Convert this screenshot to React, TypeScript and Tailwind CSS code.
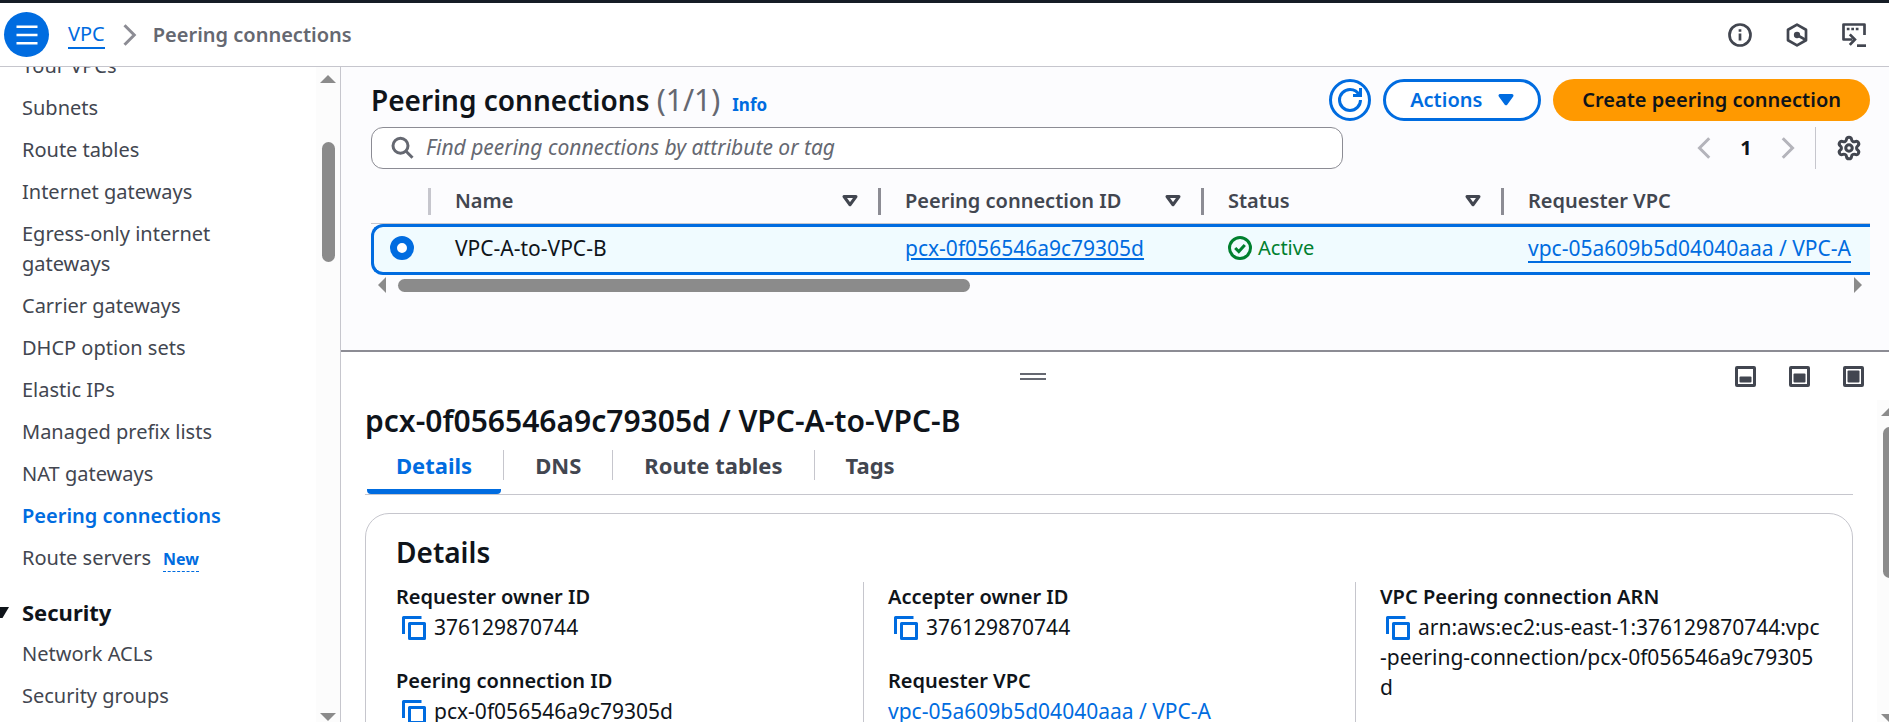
import type { ReactNode } from "react";
import { Settings } from "lucide-react";

type IconProps = { children: ReactNode; className?: string };

function Icon({ children, className = "size-6" }: IconProps) {
  return (
    <svg viewBox="0 0 16 16" className={`shrink-0 ${className}`} fill="none" stroke="currentColor" strokeWidth={2} aria-hidden="true">
      {children}
    </svg>
  );
}

const CopyIcon = () => (
  <Icon className="size-6 text-[#006ce0]">
    <path d="M1 12V1h12" strokeLinejoin="round" />
    <path d="M5 5h10v10H5z" strokeLinejoin="round" />
  </Icon>
);

const navItems = [
  "Your VPCs",
  "Subnets",
  "Route tables",
  "Internet gateways",
  "Egress-only internet gateways",
  "Carrier gateways",
  "DHCP option sets",
  "Elastic IPs",
  "Managed prefix lists",
  "NAT gateways",
  "Peering connections",
  "Route servers",
];

function Arrow({ dir }: { dir: "up" | "down" | "left" | "right" }) {
  const points = {
    up: "0,8 8,0 16,8",
    down: "0,0 16,0 8,8",
    left: "8,0 8,16 0,8",
    right: "0,0 8,8 0,16",
  }[dir];
  const vertical = dir === "up" || dir === "down";
  return (
    <svg
      viewBox={vertical ? "0 0 16 8" : "0 0 8 16"}
      className={vertical ? "h-2 w-4 shrink-0" : "h-4 w-2 shrink-0"}
      fill="#8b8b8b"
      aria-hidden="true"
    >
      <polygon points={points} />
    </svg>
  );
}

function Header() {
  return (
    <header className="flex h-[67px] shrink-0 items-center border-t-3 border-b border-t-[#161d26] border-b-[#c6c6cd] bg-white pr-[23px] pl-1 text-[20px] leading-[30px]">
      <button aria-label="Open navigation" className="flex size-[45px] items-center justify-center rounded-full bg-[#006ce0] text-white">
        <Icon>
          <path d="M1 2.500h14M1 8h14M1 13.500h14" strokeWidth="1.8" />
        </Icon>
      </button>
      <nav aria-label="Breadcrumbs" className="ml-[19px] flex items-center">
        <a href="#vpc" className="border-b-2 border-[#006ce0] leading-[26px] text-[#006ce0]">
          VPC
        </a>
        <Icon className="mx-3 size-6 text-[#8c8c94]">
          <path d="m5 1.500 6.500 6.500-6.500 6.500" />
        </Icon>
        <span className="font-semibold text-[#656871]">Peering connections</span>
      </nav>
      <div className="ml-auto flex gap-[33px] text-[#424650]">
        <button aria-label="Info">
          <Icon>
            <circle cx="8" cy="8" r="7" strokeWidth="1.8" />
            <path d="M8 7v4.600M8 4.100v1.800" strokeWidth="1.8" />
          </Icon>
        </button>
        <button aria-label="Amazon Q">
          <Icon>
            <path d="M8 1.100 14 4.500v7L8 14.900 2 11.500v-7z" strokeWidth="1.8" strokeLinejoin="round" />
            <circle cx="8" cy="8" r="2.100" fill="currentColor" stroke="none" />
            <path d="m8 8 5.500 3.100" strokeWidth="1.8" />
          </Icon>
        </button>
        <button aria-label="CloudShell">
          <Icon>
            <path d="M15 8V1H1v10h6" strokeWidth="1.8" strokeLinejoin="round" />
            <path d="m5.200 7.600 3.400 3.400-3.400 3.600" strokeWidth="1.8" />
            <path d="M10 15.100h6" strokeWidth="1.8" />
            <path d="M3.200 4h1.800M6.200 4h1.800M9.200 4h1.800" strokeWidth="1.8" />
          </Icon>
        </button>
      </div>
    </header>
  );
}

function Sidebar() {
  return (
    <aside className="flex w-[341px] shrink-0 overflow-hidden border-r border-[#c6c6cd] bg-white">
      <nav aria-label="VPC" className="min-w-0 flex-1 text-[20px] leading-[30px] text-[#424650]">
        <ul className="-mt-4 flex flex-col gap-3 pl-[22px]">
          {navItems.map((item) => (
            <li key={item} className="max-w-56">
              <a href="#nav" className={item === "Peering connections" ? "block whitespace-nowrap font-semibold text-[#006ce0]" : "inline-block"}>
                {item}
              </a>
              {item === "Route servers" && (
                <button className="ml-3 border-b border-dashed border-[#006ce0] text-[16px] leading-6 font-bold text-[#006ce0]">New</button>
              )}
            </li>
          ))}
          <li className="mt-3 -ml-[22px]">
            <button className="flex items-center text-[22px] leading-[30px] font-bold text-[#0f141a]">
              <svg viewBox="0 0 9 11" className="mr-[13px] h-[11px] w-[9px]" fill="currentColor" aria-hidden="true">
                <path d="M0 0h9L2.500 11H0z" />
              </svg>
              Security
            </button>
          </li>
          <li>
            <a href="#nav">Network ACLs</a>
          </li>
          <li>
            <a href="#nav">Security groups</a>
          </li>
        </ul>
      </nav>
      <div className="flex w-6 flex-col items-center bg-[#fcfcfc] pt-2 pb-px" aria-hidden="true">
        <Arrow dir="up" />
        <div className="mt-[59px] h-[120px] w-[13px] rounded-full bg-[#8b8b8b]" />
        <div className="mt-auto flex">
          <Arrow dir="down" />
        </div>
      </div>
    </aside>
  );
}

function HeaderCell({ label, sortable = true, last = false }: { label: string; sortable?: boolean; last?: boolean }) {
  return (
    <th scope="col" className="h-[41px] border-b border-[#c6c6cd] p-0 pb-1 text-left font-semibold text-[#424650]">
      <div className={`flex h-[27px] items-center pl-6 ${last ? "" : "border-r-3 border-[#8c8c94] pr-4"}`}>
        {label}
        {sortable && (
          <button aria-label={`Sort by ${label}`} className="ml-auto">
            <Icon>
              <path d="M4 5h8l-4 5.500z" strokeLinejoin="round" />
            </Icon>
          </button>
        )}
      </div>
    </th>
  );
}

const cell = "h-[51px] border-y-3 border-[#006ce0] bg-[#f0fbff] p-0 pb-1 pl-6";

function ConnectionsTable() {
  return (
    <>
      <div className="mt-[14px] overflow-hidden">
        <table className="w-[2000px] table-fixed border-separate border-spacing-0 text-[21px] leading-[30px]">
          <colgroup>
            <col className="w-[60px]" />
            <col className="w-[450px]" />
            <col className="w-[323px]" />
            <col className="w-[300px]" />
            <col />
          </colgroup>
          <thead className="text-[20px]">
            <tr>
              <th scope="col" className="h-[41px] border-b border-[#c6c6cd] p-0 pb-1">
                <div className="h-[27px] border-r-3 border-[#c6c6cd]" />
              </th>
              <HeaderCell label="Name" />
              <HeaderCell label="Peering connection ID" />
              <HeaderCell label="Status" />
              <HeaderCell label="Requester VPC" last />
            </tr>
          </thead>
          <tbody>
            <tr>
              <td className="h-[51px] rounded-l-xl border-y-3 border-l-3 border-[#006ce0] bg-[#f0fbff] p-0 pb-1 pl-4">
                <input
                  type="radio"
                  defaultChecked
                  aria-label="Select VPC-A-to-VPC-B"
                  className="block size-6 appearance-none rounded-full border-7 border-[#006ce0] bg-white"
                />
              </td>
              <td className={cell}>VPC-A-to-VPC-B</td>
              <td className={cell}>
                <a href="#pcx" className="text-[#006ce0] underline decoration-2 underline-offset-2">
                  pcx-0f056546a9c79305d
                </a>
              </td>
              <td className={cell}>
                <span className="flex items-center gap-1.5 text-[20px] text-[#00802f]">
                  <Icon>
                    <circle cx="8" cy="8" r="7" />
                    <path d="m4.800 8 2.400 2.400 4-4.400" />
                  </Icon>
                  Active
                </span>
              </td>
              <td className={cell}>
                <a href="#vpc-a" className="inline-block border-b-2 border-[#006ce0] leading-[26px] text-[#006ce0]">
                  vpc-05a609b5d04040aaa / VPC-A
                </a>
              </td>
            </tr>
          </tbody>
        </table>
      </div>
      <div className="flex items-center pt-0.5 pr-2 pl-[7px]" aria-hidden="true">
        <Arrow dir="left" />
        <div className="ml-3 flex-1">
          <div className="h-[13px] w-[572px] rounded-full bg-[#8b8b8b]" />
        </div>
        <Arrow dir="right" />
      </div>
    </>
  );
}

function ConnectionsPane() {
  return (
    <section className="shrink-0 bg-[#fcfcfe] pt-3 pr-[19px] pb-[57px] pl-[30px]">
      <div className="flex items-center gap-3">
        <div className="mr-auto flex items-baseline">
          <h1 className="text-[28px] leading-9 font-semibold text-[#0f141a]">
            Peering connections <span className="text-[30px] font-normal text-[#656871]">(1/1)</span>
          </h1>
          <a href="#info" className="ml-3 text-[17px] font-bold text-[#006ce0]">
            Info
          </a>
        </div>
        <button aria-label="Refresh" className="flex size-[42px] items-center justify-center rounded-full border-3 border-[#006ce0] bg-white text-[#006ce0]">
          <Icon>
            <path d="M15 8c0 3.870-3.130 7-7 7s-7-3.130-7-7 3.130-7 7-7c2.790 0 5.200 1.630 6.330 4" />
            <path d="M10 5h5V0" />
          </Icon>
        </button>
        <button className="flex h-[42px] w-[158px] items-center justify-center gap-3 rounded-full border-3 border-[#006ce0] bg-white pl-1 text-[20px] font-semibold text-[#006ce0]">
          Actions
          <Icon>
            <path d="M4 5h8l-4 5.500z" fill="currentColor" strokeLinejoin="round" />
          </Icon>
        </button>
        <button className="h-[42px] rounded-full bg-[#ff9900] px-[29px] text-[20px] font-semibold text-[#0f141a]">Create peering connection</button>
      </div>
      <div className="mt-1.5 flex items-center">
        <label className="flex h-[42px] min-w-0 flex-1 items-center gap-3 rounded-xl border border-[#8c8c94] bg-white pl-[18px] text-[#656871]">
          <Icon>
            <circle cx="7" cy="6.500" r="5" />
            <path d="m10.700 10.200 4.300 4.300" />
          </Icon>
          <input
            type="search"
            aria-label="Find peering connections"
            placeholder="Find peering connections by attribute or tag"
            className="min-w-0 flex-1 bg-transparent pr-4 text-[21px] italic outline-none placeholder:text-[#656871]"
          />
        </label>
        <div className="flex h-[42px] w-[527px] items-center justify-end">
          <button aria-label="Previous page" disabled className="text-[#b4b4bb]">
            <Icon>
              <path d="M11.500 1.500 5 8l6.500 6.500" />
            </Icon>
          </button>
          <button className="w-[60px] text-center text-[20px] font-bold text-[#0f141a]">1</button>
          <button aria-label="Next page" disabled className="text-[#b4b4bb]">
            <Icon>
              <path d="M4.500 1.500 11 8l-6.500 6.500" />
            </Icon>
          </button>
          <button aria-label="Preferences" className="ml-[15px] flex h-[42px] items-center border-l border-[#c6c6cd] pr-2 pl-5 text-[#424650]">
            <Settings size={26} strokeWidth={2.8} />
          </button>
        </div>
      </div>
      <ConnectionsTable />
    </section>
  );
}

function SizeIcon({ top }: { top: number }) {
  return (
    <svg viewBox="0 0 21 21" className="size-[21px]" fill="none" aria-hidden="true">
      <rect x="1.500" y="1.500" width="18" height="18" rx="0.500" stroke="currentColor" strokeWidth="3" />
      <rect x="4.500" y={top} width="12" height={16.5 - top} rx="1" fill="currentColor" />
    </svg>
  );
}

function Field({ label, children }: { label: string; children: ReactNode }) {
  return (
    <div>
      <dt className="text-[20px] font-semibold">{label}</dt>
      <dd className="text-[21px] break-all">{children}</dd>
    </div>
  );
}

function CopyValue({ value }: { value: string }) {
  return (
    <>
      <button aria-label={`Copy ${value}`} className="mr-2 ml-1.5 inline-block align-[-5px]">
        <CopyIcon />
      </button>
      {value}
    </>
  );
}

const column = "flex flex-col gap-6 border-l px-6";
const tab = "mt-px h-[30px] border-l border-[#c6c6cd] px-[31px]";

function SplitPanel() {
  return (
    <section className="flex min-h-0 flex-1 flex-col border-t-2 border-[#8c8c94] bg-white text-[#0f141a]">
      <div className="flex h-12 shrink-0 items-center">
        <div className="flex flex-1 justify-center">
          <button aria-label="Resize panel" className="h-[7px] w-[26px] border-y-2 border-[#656871]" />
        </div>
        <div className="flex w-[164px] gap-[33px] pl-[10px] text-[#424650]">
          <button aria-label="Small panel">
            <SizeIcon top={10.5} />
          </button>
          <button aria-label="Medium panel">
            <SizeIcon top={7.5} />
          </button>
          <button aria-label="Full panel">
            <SizeIcon top={4.5} />
          </button>
        </div>
      </div>
      <div className="flex min-h-0 flex-1">
        <div className="min-w-0 flex-1 overflow-hidden px-6">
          <h2 className="mt-[3px] text-[30px] leading-9 font-semibold">pcx-0f056546a9c79305d / VPC-A-to-VPC-B</h2>
          <div role="tablist" className="mt-2.5 flex h-[46px] border-b border-[#c6c6cd] text-[22px] leading-[30px] font-bold text-[#424650]">
            <button role="tab" aria-selected="true" className="mr-0.5 ml-0.5 flex flex-col items-center rounded-b-sm border-b-5 border-[#006ce0] px-[29px] pt-px text-[#006ce0]">
              Details
            </button>
            <button role="tab" aria-selected="false" className={tab}>
              DNS
            </button>
            <button role="tab" aria-selected="false" className={tab}>
              Route tables
            </button>
            <button role="tab" aria-selected="false" className={tab}>
              Tags
            </button>
          </div>
          <div className="mt-[18px] rounded-3xl border border-[#c6c6cd] px-[5px] pt-5">
            <h3 className="px-[25px] text-[28px] leading-9 font-semibold">Details</h3>
            <dl className="mt-3 grid h-60 grid-cols-3 leading-[30px]">
              <div className={`${column} border-transparent`}>
                <Field label="Requester owner ID">
                  <CopyValue value="376129870744" />
                </Field>
                <Field label="Peering connection ID">
                  <CopyValue value="pcx-0f056546a9c79305d" />
                </Field>
              </div>
              <div className={`${column} border-[#c6c6cd]`}>
                <Field label="Accepter owner ID">
                  <CopyValue value="376129870744" />
                </Field>
                <Field label="Requester VPC">
                  <a href="#vpc-a" className="text-[#006ce0]">
                    vpc-05a609b5d04040aaa / VPC-A
                  </a>
                </Field>
              </div>
              <div className={`${column} border-[#c6c6cd]`}>
                <Field label="VPC Peering connection ARN">
                  <CopyValue value="arn:aws:ec2:us-east-1:376129870744:vpc-peering-connection/pcx-0f056546a9c79305d" />
                </Field>
              </div>
            </dl>
          </div>
        </div>
        <div className="w-3 shrink-0 overflow-hidden bg-[#fcfcfc]" aria-hidden="true">
          <div className="flex h-full w-6 flex-col items-center pt-2">
            <Arrow dir="up" />
            <div className="mt-[11px] h-[151px] w-[13px] rounded-full bg-[#8b8b8b]" />
            <div className="mt-auto flex">
              <Arrow dir="down" />
            </div>
          </div>
        </div>
      </div>
    </section>
  );
}

export default function App() {
  return (
    <div className="flex h-screen flex-col overflow-hidden bg-white font-['Noto_Sans','Open_Sans',sans-serif] text-[#0f141a]">
      <Header />
      <div className="flex min-h-0 flex-1">
        <Sidebar />
        <main className="flex min-w-0 flex-1 flex-col">
          <ConnectionsPane />
          <SplitPanel />
        </main>
      </div>
    </div>
  );
}
